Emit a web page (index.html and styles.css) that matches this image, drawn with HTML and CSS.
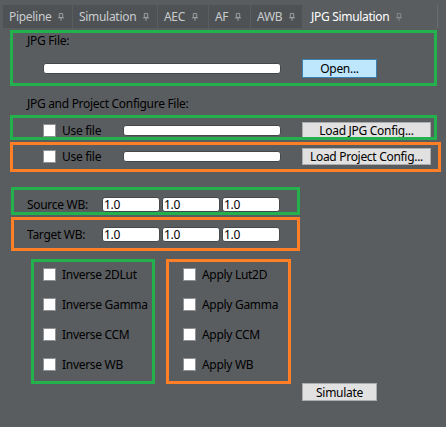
FILE: index.html
```html
<!DOCTYPE html>
<html>
<head>
<meta charset="utf-8">
<link rel="stylesheet" href="styles.css">
</head>
<body>
<div class="tabbar">
  <div class="tab t1"><span>Pipeline</span><svg class="pin" viewBox="0 0 7 9"><path d="M1.5 0.5h4v4.5h-4z M0 5.5h7 M3.5 5.5v3.5" fill="none" stroke="currentColor" stroke-width="1"/></svg></div>
  <div class="tab t2"><span>Simulation</span><svg class="pin" viewBox="0 0 7 9"><path d="M1.5 0.5h4v4.5h-4z M0 5.5h7 M3.5 5.5v3.5" fill="none" stroke="currentColor" stroke-width="1"/></svg></div>
  <div class="tab t3"><span>AEC</span><svg class="pin" viewBox="0 0 7 9"><path d="M1.5 0.5h4v4.5h-4z M0 5.5h7 M3.5 5.5v3.5" fill="none" stroke="currentColor" stroke-width="1"/></svg></div>
  <div class="tab t4"><span>AF</span><svg class="pin" viewBox="0 0 7 9"><path d="M1.5 0.5h4v4.5h-4z M0 5.5h7 M3.5 5.5v3.5" fill="none" stroke="currentColor" stroke-width="1"/></svg></div>
  <div class="tab t5"><span>AWB</span><svg class="pin" viewBox="0 0 7 9"><path d="M1.5 0.5h4v4.5h-4z M0 5.5h7 M3.5 5.5v3.5" fill="none" stroke="currentColor" stroke-width="1"/></svg></div>
  <div class="tab active t6"><span>JPG Simulation</span><svg class="pin" viewBox="0 0 7 9"><path d="M1.5 0.5h4v4.5h-4z M0 5.5h7 M3.5 5.5v3.5" fill="none" stroke="currentColor" stroke-width="1"/></svg></div>
</div>

<div class="page">
  <div class="frame green f-jpg">
    <div class="lbl">JPG File:</div>
    <div class="row open-row">
      <input class="field w-path" type="text">
      <button class="btn btn-open">Open...</button>
    </div>
  </div>

  <div class="section-title">JPG and Project Configure File:</div>

  <div class="frame green f-cfg1">
    <div class="row cfg-row">
      <input class="cb" type="checkbox">
      <span class="cb-text use">Use file</span>
      <input class="field w-cfg" type="text">
      <button class="btn btn-cfg">Load JPG Config...</button>
    </div>
  </div>

  <div class="frame orange f-cfg2">
    <div class="row cfg-row">
      <input class="cb" type="checkbox">
      <span class="cb-text use">Use file</span>
      <input class="field w-cfg" type="text">
      <button class="btn btn-cfg">Load Project Config...</button>
    </div>
  </div>

  <div class="frame green f-wb f-src">
    <div class="row wb-row">
      <span class="wb-label">Source WB:</span>
      <input class="field wb" type="text" value="1.0">
      <input class="field wb" type="text" value="1.0">
      <input class="field wb" type="text" value="1.0">
    </div>
  </div>

  <div class="frame orange f-wb f-tgt">
    <div class="row wb-row">
      <span class="wb-label">Target WB:</span>
      <input class="field wb" type="text" value="1.0">
      <input class="field wb" type="text" value="1.0">
      <input class="field wb" type="text" value="1.0">
    </div>
  </div>

  <div class="groups">
    <div class="frame green group g-inv">
      <label class="opt"><input class="cb" type="checkbox"><span class="cb-text">Inverse 2DLut</span></label>
      <label class="opt"><input class="cb" type="checkbox"><span class="cb-text">Inverse Gamma</span></label>
      <label class="opt"><input class="cb" type="checkbox"><span class="cb-text">Inverse CCM</span></label>
      <label class="opt"><input class="cb" type="checkbox"><span class="cb-text">Inverse WB</span></label>
    </div>
    <div class="frame orange group g-app">
      <label class="opt"><input class="cb" type="checkbox"><span class="cb-text">Apply Lut2D</span></label>
      <label class="opt"><input class="cb" type="checkbox"><span class="cb-text">Apply Gamma</span></label>
      <label class="opt"><input class="cb" type="checkbox"><span class="cb-text">Apply CCM</span></label>
      <label class="opt"><input class="cb" type="checkbox"><span class="cb-text">Apply WB</span></label>
    </div>
  </div>

  <div class="sim-row">
    <button class="btn btn-sim">Simulate</button>
  </div>
</div>
</body>
</html>
```

FILE: styles.css
```css
* { box-sizing: border-box; }

html, body {
  margin: 0;
  padding: 0;
  background: #5a5d60;
  width: 446px;
  height: 427px;
  overflow: hidden;
  font-family: "Noto Sans", "Open Sans", sans-serif;
  font-size: 12px;
  letter-spacing: -0.3px;
  color: #000;
}

/* ---------- tabs ---------- */
.tabbar {
  display: flex;
  gap: 1px;
  padding: 5px 0 0 3px;
  height: 28px;
}
.tab {
  height: 23px;
  display: flex;
  align-items: center;
  padding-left: 6px;
  background: #4e5255;
  color: #c9cbcd;
  line-height: 16px;
  white-space: nowrap;
}
.tab.active {
  background: #5a5d60;
  color: #ffffff;
  border-right: 1px solid #6a6d70;
}
.t1 { width: 69px; }
.t2 { width: 84px; }
.t3 { width: 50px; }
.t4 { width: 41px; }
.t5 { width: 51px; }
.t6 { width: 135px; padding-left: 8px; }

.pin {
  width: 6px;
  height: 8px;
  margin-left: 7px;
  color: #a6a8aa;
  flex: none;
}
.active .pin { color: #8d9093; }

/* ---------- page ---------- */
.page {
  display: flex;
  flex-direction: column;
  align-items: flex-start;
  padding: 2px 0 0 10px;
}

.frame {
  position: relative;
  flex: none;
}
.frame::after {
  content: "";
  position: absolute;
  inset: 0;
  border: 3px solid;
  pointer-events: none;
}
.green::after { border-color: #22b14c; }
.orange::after { border-color: #ff7f27; }

.row {
  display: flex;
  align-items: center;
}

.lbl,
.section-title {
  line-height: 16px;
  white-space: nowrap;
}

/* inputs */
.field {
  appearance: none;
  -webkit-appearance: none;
  margin: 0;
  background: #ffffff;
  border: 1px solid #45484b;
  border-radius: 3px;
  font: inherit;
  letter-spacing: inherit;
  color: #000;
  padding: 0 1px;
  outline: none;
}
.cb {
  appearance: none;
  -webkit-appearance: none;
  margin: 0;
  width: 13px;
  height: 13px;
  background: #ffffff;
  border: 1px solid #8f9193;
  flex: none;
}
.cb-text {
  margin-left: 6px;
  line-height: 16px;
  white-space: nowrap;
}

.btn {
  appearance: none;
  -webkit-appearance: none;
  margin: 0;
  padding: 0;
  font: inherit;
  letter-spacing: inherit;
  color: #000;
  background: #e1e1e1;
  border: 1px solid #adadad;
  line-height: 15px;
  white-space: nowrap;
  flex: none;
}

/* JPG file frame */
.f-jpg {
  width: 427px;
  height: 56px;
  padding: 3px 0 0 17px;
}
.open-row {
  margin-top: 10px;
  padding-left: 16px;
  height: 19px;
}
.w-path {
  width: 238px;
  height: 11px;
  margin-right: 21px;
}
.btn-open {
  width: 75px;
  height: 19px;
  background: #bee6fd;
  border-color: #3c7fb1;
}

.section-title {
  margin-top: 10px;
  padding-left: 17px;
}

/* config frames */
.f-cfg1 {
  margin-top: 3px;
  width: 427px;
  height: 25px;
  padding: 7px 0 0 33px;
}
.f-cfg2 {
  margin-top: 2px;
  width: 431px;
  height: 30px;
  padding: 6px 0 0 33px;
}
.cfg-row { height: 17px; }
.use { width: 61px; }
.w-cfg {
  width: 158px;
  height: 11px;
  margin-right: 21px;
}
.btn-cfg {
  width: 129px;
  height: 17px;
}

/* WB frames */
.f-wb {
  margin-left: 1px;
  width: 289px;
  padding: 10px 0 0 16px;
}
.f-src { margin-top: 15px; height: 28px; }
.f-tgt { margin-top: 2px; height: 34px; }
.wb-row { height: 15px; gap: 2px; }
.wb-label {
  width: 73px;
  line-height: 16px;
  white-space: nowrap;
}
.field.wb {
  width: 58px;
  height: 15px;
  line-height: 13px;
}

/* option groups */
.groups {
  display: flex;
  gap: 11px;
  margin: 8px 0 0 21px;
}
.group {
  height: 125px;
  padding-top: 9px;
  display: flex;
  flex-direction: column;
  gap: 17px;
}
.g-inv { width: 124px; padding-left: 12px; }
.g-app { width: 125px; padding-left: 17px; }
.opt {
  display: flex;
  align-items: center;
  height: 13px;
}

/* simulate */
.sim-row {
  margin-top: -1px;
  padding-left: 292px;
}
.btn-sim {
  width: 75px;
  height: 18px;
}
```
